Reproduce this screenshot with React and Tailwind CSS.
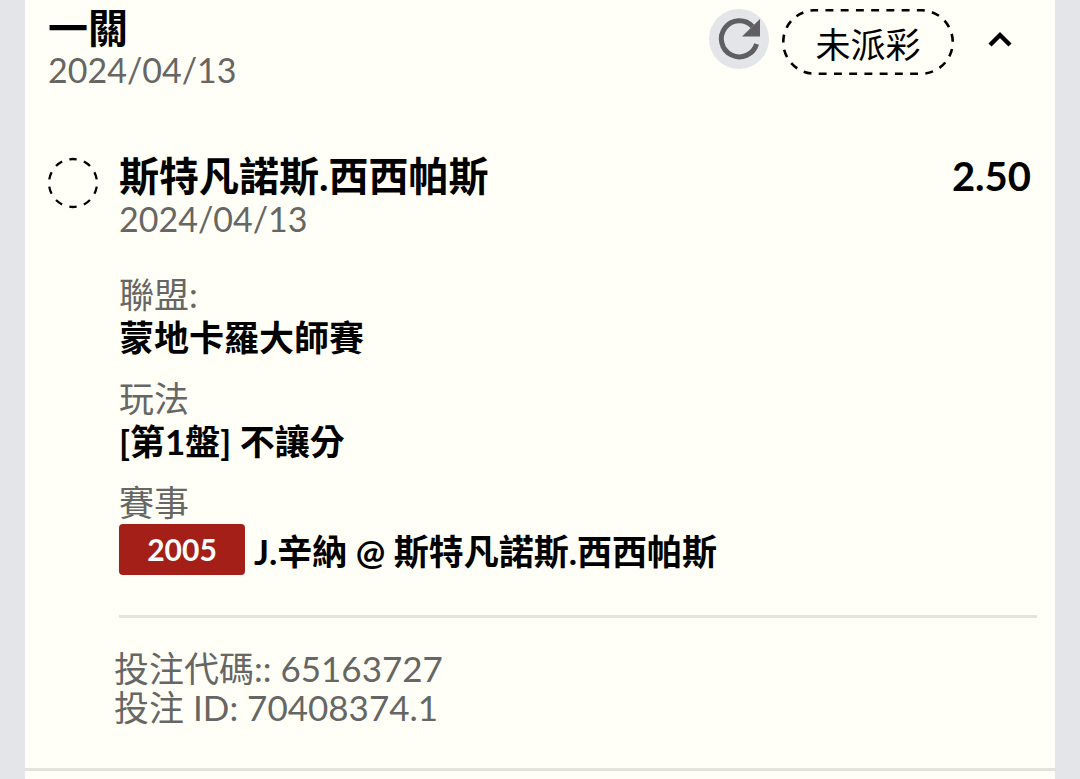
import React from "react";

const selection = {
  name: "斯特凡諾斯.西西帕斯",
  date: "2024/04/13",
  odds: "2.50",
};

function RefreshIcon() {
  return (
    <svg viewBox="0 0 60 60" className="size-full" aria-hidden="true">
      <path
        d="M47.6 35 A18 18 0 1 1 43.5 17.5"
        fill="none"
        stroke="#5f5f61"
        strokeWidth="5"
      />
      <path d="M51 10 V27.5 H33 Z" fill="#5f5f61" />
    </svg>
  );
}

function ChevronUpIcon() {
  return (
    <svg viewBox="0 0 24 16" className="h-4 w-6" aria-hidden="true">
      <path d="M2 14 L12 4 L22 14" fill="none" stroke="#000" strokeWidth="4.4" />
    </svg>
  );
}

function StatusPill({ children }) {
  return (
    <span className="relative flex h-[66px] w-[172px] items-center justify-center pt-1 text-[35px] leading-10 text-black">
      <svg viewBox="0 0 172 66" className="absolute inset-0 size-full" aria-hidden="true">
        <rect
          x="1.25"
          y="1.25"
          width="169.5"
          height="63.5"
          rx="31.7"
          fill="none"
          stroke="#000"
          strokeWidth="2.6"
          strokeDasharray="7.9 7.34"
          strokeDashoffset="-10.5"
        />
      </svg>
      {children}
    </span>
  );
}

function PendingMark() {
  return (
    <svg viewBox="0 0 52 52" className="mt-1 size-[52px] shrink-0" aria-hidden="true">
      <circle
        cx="26"
        cy="26"
        r="24"
        fill="none"
        stroke="#000"
        strokeWidth="2.3"
        strokeDasharray="18 18"
        strokeDashoffset="9"
        pathLength="360"
        transform="rotate(-90 26 26)"
      />
    </svg>
  );
}

function Detail({ label, children }) {
  return (
    <div>
      <dt className="text-[35px] leading-[43px] text-[#666664]">{label}</dt>
      <dd className="text-[35px] leading-[43px] font-bold text-black">{children}</dd>
    </div>
  );
}

export default function App() {
  return (
    <div className="min-h-screen bg-[#e4e5e9] px-[25px] font-['Lato','Noto_Sans_CJK_TC',sans-serif]" lang="zh-Hant">
      <main className="min-h-screen bg-[#fffff7]">
        <article className="border-b-[3px] border-[#e4e4de] pr-[18px] pb-[41px] pl-[22px]">
          <header className="flex items-start justify-between pt-[9px]">
            <div className="pl-[1px]">
              <h1 className="text-[40px] leading-[38px] font-bold text-black">一關</h1>
              <p className="text-[34px] leading-[45px] text-[#666664]">{selection.date}</p>
            </div>
            <div className="flex items-start">
              <button type="button" aria-label="重新整理" className="mr-[13px] size-[60px] rounded-full bg-[#e4e5e9]">
                <RefreshIcon />
              </button>
              <StatusPill>未派彩</StatusPill>
              <button type="button" aria-label="收合" aria-expanded="true" className="mr-[25px] ml-[34px] flex h-[60px] items-center">
                <ChevronUpIcon />
              </button>
            </div>
          </header>

          <section className="mt-[61px] flex gap-5">
            <PendingMark />
            <div className="min-w-0 flex-1">
              <div className="flex items-start justify-between pr-[6px]">
                <h2 className="text-[40px] leading-[47px] font-bold text-black">{selection.name}</h2>
                <span className="text-[40px] leading-[47px] font-bold text-black">{selection.odds}</span>
              </div>
              <p className="text-[34px] leading-[38px] text-[#666664]">{selection.date}</p>

              <dl className="mt-[35px] flex flex-col gap-[18px]">
                <Detail label="聯盟:">蒙地卡羅大師賽</Detail>
                <Detail label="玩法">[第1盤] 不讓分</Detail>
                <Detail label="賽事">
                  <span className="flex items-center gap-[9px]">
                    <span className="flex h-[51px] w-[126px] items-center justify-center rounded bg-[#a41f18] text-[30px] text-white">
                      2005
                    </span>
                    <span className="pt-1">J.辛納 @ {selection.name}</span>
                  </span>
                </Detail>
              </dl>
            </div>
          </section>

          <footer className="mt-10 ml-[72px] border-t-[3px] border-[#e4e4de]">
            <div className="-ml-[5px] pt-[31px] text-[35px] leading-[39px] text-[#666664]">
              <p>投注代碼:: 65163727</p>
              <p>投注 ID: 70408374.1</p>
            </div>
          </footer>
        </article>
      </main>
    </div>
  );
}
